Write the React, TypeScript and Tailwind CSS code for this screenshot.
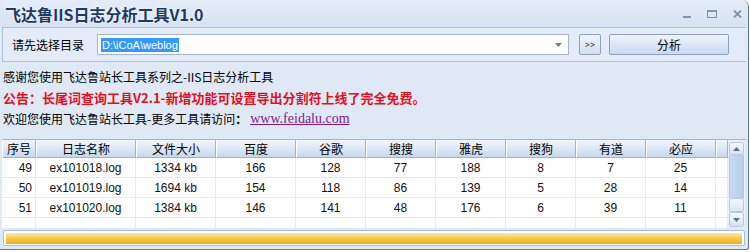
import React from 'react'

const COLS = [
  { title: '序号', w: 'w-[34px]' },
  { title: '日志名称', w: 'w-[100px]' },
  { title: '文件大小', w: 'w-[80px]' },
  { title: '百度', w: 'w-[80px]' },
  { title: '谷歌', w: 'w-[70px]' },
  { title: '搜搜', w: 'w-[70px]' },
  { title: '雅虎', w: 'w-[70px]' },
  { title: '搜狗', w: 'w-[70px]' },
  { title: '有道', w: 'w-[70px]' },
  { title: '必应', w: 'w-[70px]' },
  { title: '', w: 'w-[12px]' },
]

const ROWS = [
  ['49', 'ex101018.log', '1334 kb', '166', '128', '77', '188', '8', '7', '25', ''],
  ['50', 'ex101019.log', '1694 kb', '154', '118', '86', '139', '5', '28', '14', ''],
  ['51', 'ex101020.log', '1384 kb', '146', '141', '48', '176', '6', '39', '11', ''],
  ['', '', '', '', '', '', '', '', '', '', ''],
]

const cjk = "font-['Noto_Sans_CJK_SC',sans-serif]"
const sans = "font-['Liberation_Sans','Noto_Sans_CJK_SC',sans-serif]"

function WinButtons() {
  return (
    <div className="flex items-center gap-[16px] pr-[6px] text-[#8593a8]">
      <svg width="8" height="8" viewBox="0 0 8 8">
        <rect x="0" y="6" width="8" height="2" fill="currentColor" />
      </svg>
      <svg width="10" height="8" viewBox="0 0 10 8">
        <rect x="0.5" y="0.5" width="9" height="7" fill="none" stroke="currentColor" />
        <rect x="0" y="0" width="10" height="2" fill="currentColor" />
      </svg>
      <svg width="9" height="8" viewBox="0 0 9 8">
        <path d="M1 0.5 L8 7.5 M8 0.5 L1 7.5" stroke="currentColor" strokeWidth="1.8" />
      </svg>
    </div>
  )
}

function Scrollbar() {
  return (
    <div className="flex h-full w-[17px] shrink-0 flex-col bg-[#e9f0f9] px-[1px] pt-[2px]">
      <div className="flex h-[13px] shrink-0 items-center justify-center rounded-[2px] border border-[#b7c9e0] bg-gradient-to-b from-[#f4f8fd] to-[#d6e3f3]">
        <svg width="7" height="4" viewBox="0 0 7 4">
          <path d="M0 4 L3.5 0 L7 4 Z" fill="#5c7294" />
        </svg>
      </div>
      <div className="h-[43px] shrink-0 border-x border-[#b2c6e0] bg-gradient-to-r from-[#c9daf0] to-[#b7cdea]" />
      <div className="h-[14px] shrink-0 rounded-[2px] border border-[#b7c9e0] bg-gradient-to-b from-[#f1f6fc] to-[#dce7f5]" />
      <div className="flex h-[15px] shrink-0 items-center justify-center rounded-[2px] border border-[#b7c9e0] bg-gradient-to-b from-[#f4f8fd] to-[#d6e3f3]">
        <svg width="7" height="4" viewBox="0 0 7 4">
          <path d="M0 0 L3.5 4 L7 0 Z" fill="#5c7294" />
        </svg>
      </div>
    </div>
  )
}

export default function App() {
  return (
    <div className="h-[252px] w-[750px] overflow-hidden bg-white">
      <div className="flex h-[250px] w-[749px] flex-col overflow-hidden rounded-tr-[7px] rounded-br-[3px] border-r border-b border-[#5f7799] bg-[#dfe9f6]">
        {/* Title bar */}
        <div className="flex h-[27px] shrink-0 items-center justify-between bg-gradient-to-b from-[#e3ecf8] to-[#d6e3f3] pl-[5px]">
          <span className={`${cjk} text-[16px] font-bold text-[#1f3a62] [text-shadow:0_0_3px_#ffffff]`}>
            飞达鲁IIS日志分析工具V1.0
          </span>
          <WinButtons />
        </div>

        {/* Directory panel */}
        <div className="mx-[2px] flex h-[35px] shrink-0 items-center border-t border-l border-b border-[#aec1da] bg-[#e2ebf7]">
          <span className={`${cjk} ml-[9px] text-[12px] text-black`}>请先选择目录</span>
          <div className="ml-[13px] flex h-[21px] w-[472px] items-center border border-[#a3b6cf] bg-white pl-[3px] pr-[6px]">
            <span className={`${sans} bg-[#3399ff] px-[1px] text-[11px] leading-[14px] text-white`}>D:\iCoA\weblog</span>
            <svg className="ml-auto" width="7" height="4" viewBox="0 0 7 4">
              <path d="M0 0 L3.5 4 L7 0 Z" fill="#6d7c91" />
            </svg>
          </div>
          <button className="ml-[10px] flex h-[21px] w-[22px] items-center justify-center rounded-[2px] border border-[#8ea3c2] bg-gradient-to-b from-[#eef4fb] to-[#d2e0f2] text-[9px] leading-none text-[#222]">
            &gt;&gt;
          </button>
          <button className={`${cjk} ml-[8px] flex h-[21px] w-[120px] items-center justify-center rounded-[2px] border border-[#8ea3c2] bg-gradient-to-b from-[#eef4fb] via-[#dbe7f6] to-[#c9daf0] text-[12px] text-black`}>
            分析
          </button>
        </div>

        {/* Notices */}
        <div className="flex shrink-0 flex-col pl-[3px] pt-[4px]">
          <div className={`${cjk} flex h-[21px] items-center text-[12px] text-black`}>
            感谢您使用飞达鲁站长工具系列之-IIS日志分析工具
          </div>
          <div className={`${cjk} flex h-[21px] items-center text-[13px] font-bold text-[#e3101b]`}>
            公告：长尾词查询工具V2.1-新增功能可设置导出分割符上线了完全免费。
          </div>
          <div className={`${cjk} flex h-[21px] items-center text-[12px] text-black`}>
            欢迎您使用飞达鲁站长工具-更多工具请访问<span className="font-bold">：</span>
            <a className="ml-[3px] font-['Liberation_Serif',serif] text-[14px] text-[#7b1a8f] underline">www.feidalu.com</a>
          </div>
        </div>

        {/* Table */}
        <div className="ml-[2px] mt-[10px] flex h-[89px] w-[744px] shrink-0 overflow-hidden border-t border-[#9fb5d2]">
          <div className="flex flex-col overflow-hidden bg-white">
            <div className="flex h-[18px] shrink-0">
              {COLS.map((c, i) => (
                <div
                  key={i}
                  className={`${c.w} ${cjk} flex items-center justify-center border-r border-b border-[#9db4d3] border-l border-l-white bg-gradient-to-b from-[#f0f5fc] via-[#dde8f6] to-[#c6d8ef] text-[12px] leading-none text-black`}
                >
                  {c.title}
                </div>
              ))}
            </div>
            {ROWS.map((r, ri) => (
              <div key={ri} className="flex h-[20px] shrink-0">
                {r.map((v, ci) => (
                  <div
                    key={ci}
                    className={`${COLS[ci].w} ${sans} flex items-center border-r border-b border-[#e6e9ee] text-[12px] text-[#111] ${ci === 0 ? 'justify-end pr-[3px]' : 'justify-center'}`}
                  >
                    {v}
                  </div>
                ))}
              </div>
            ))}
          </div>
          <Scrollbar />
        </div>

        {/* Progress */}
        <div className="mx-[3px] mt-[2px] flex h-[16px] shrink-0 items-center rounded-[2px] border border-[#aac0da] bg-white px-[2px]">
          <div className="h-[11px] w-full bg-gradient-to-b from-[#fdeaa8] via-[#f8c944] to-[#f1ab22]" />
        </div>
      </div>
    </div>
  )
}
